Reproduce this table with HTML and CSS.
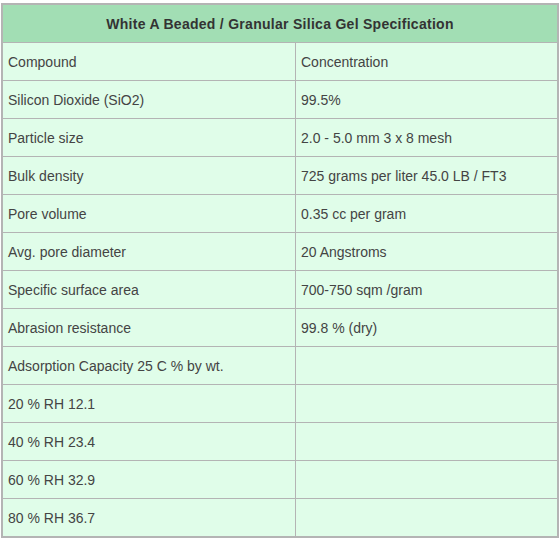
FILE: index.html
```html
<!DOCTYPE html>
<html>
<head>
<meta charset="utf-8">
<link rel="stylesheet" href="styles.css">
</head>
<body>
<div class="wrap">
<table class="spec">
  <tr><th colspan="2">White A Beaded / Granular Silica Gel Specification</th></tr>
  <tr><td class="c1">Compound</td><td>Concentration</td></tr>
  <tr><td class="c1">Silicon Dioxide (SiO2)</td><td>99.5%</td></tr>
  <tr><td class="c1">Particle size</td><td>2.0 - 5.0 mm 3 x 8 mesh</td></tr>
  <tr><td class="c1">Bulk density</td><td>725 grams per liter 45.0 LB / FT3</td></tr>
  <tr><td class="c1">Pore volume</td><td>0.35 cc per gram</td></tr>
  <tr><td class="c1">Avg. pore diameter</td><td>20 Angstroms</td></tr>
  <tr><td class="c1">Specific surface area</td><td>700-750 sqm /gram</td></tr>
  <tr><td class="c1">Abrasion resistance</td><td>99.8 % (dry)</td></tr>
  <tr><td class="c1">Adsorption Capacity 25 C % by wt.</td><td></td></tr>
  <tr><td class="c1">20 % RH 12.1</td><td></td></tr>
  <tr><td class="c1">40 % RH 23.4</td><td></td></tr>
  <tr><td class="c1">60 % RH 32.9</td><td></td></tr>
  <tr><td class="c1">80 % RH 36.7</td><td></td></tr>
</table>
</div>
</body>
</html>
```
FILE: styles.css
```css
html, body {
  margin: 0;
  padding: 0;
  background: #ffffff;
}
.wrap {
  padding: 3px 0 0 1px;
}
.spec {
  border-collapse: collapse;
  width: 558px;
  font-family: "Liberation Sans", Arial, sans-serif;
  font-size: 14px;
  color: #444444;
  border: 2px solid #b4b4b4;
}
.spec th {
  background: #a2deb4;
  color: #333333;
  font-weight: bold;
  text-align: center;
  letter-spacing: 0.28px;
  height: 37px;
  padding: 0 5px;
  border: 1px solid #b4b4b4;
}
.spec td {
  background: #e0fde9;
  height: 37px;
  padding: 0 5px;
  border: 1px solid #b4b4b4;
  text-align: left;
  vertical-align: middle;
}
.spec td.c1 {
  width: 282px;
}
```
